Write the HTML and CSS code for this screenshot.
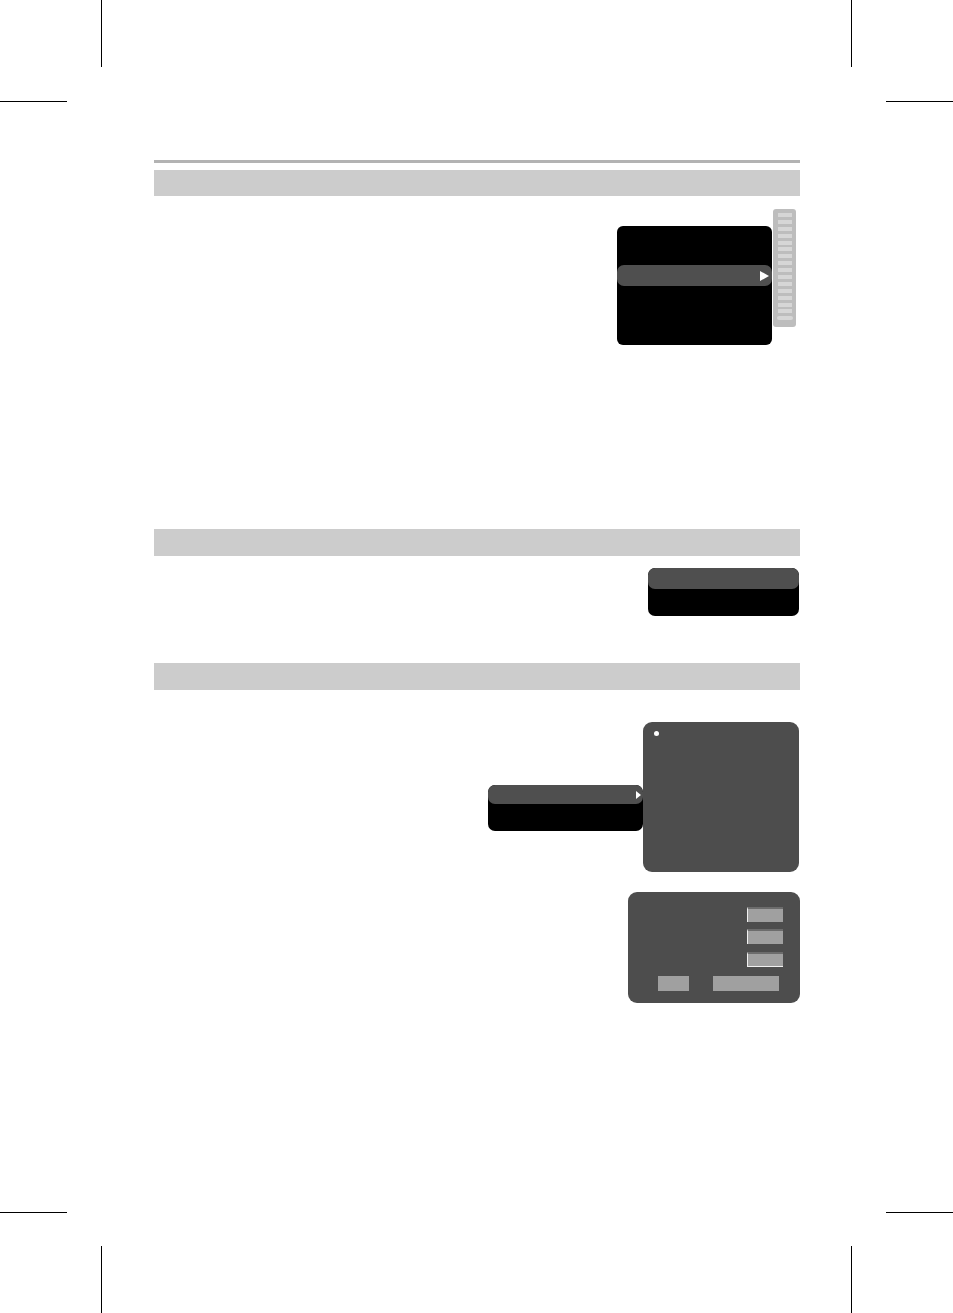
FILE: index.html
```html
<!DOCTYPE html>
<html lang="en">
<head>
<meta charset="utf-8">
<title>Manual page</title>
<link rel="stylesheet" href="styles.css">
</head>
<body>
<div class="page">
  <div class="mark mark-v mark-tl-v"></div>
  <div class="mark mark-h mark-tl-h"></div>
  <div class="mark mark-v mark-tr-v"></div>
  <div class="mark mark-h mark-tr-h"></div>
  <div class="mark mark-v mark-bl-v"></div>
  <div class="mark mark-h mark-bl-h"></div>
  <div class="mark mark-v mark-br-v"></div>
  <div class="mark mark-h mark-br-h"></div>

  <div class="content">
    <div class="rule"></div>

    <div class="bar bar-first"></div>
    <div class="section section-one">
      <div class="menu-main">
        <div class="menu-main-row">
          <svg class="tri-big" width="9" height="10" viewBox="0 0 9 10"><polygon points="0,0 9,5 0,10" fill="#fff"/></svg>
        </div>
      </div>
      <div class="scrollbar">
        <span class="seg"></span><span class="seg"></span><span class="seg"></span><span class="seg"></span>
        <span class="seg"></span><span class="seg"></span><span class="seg"></span><span class="seg"></span>
        <span class="seg"></span><span class="seg"></span><span class="seg"></span><span class="seg"></span>
        <span class="seg"></span><span class="seg"></span><span class="seg"></span><span class="seg seg-last"></span>
      </div>
    </div>

    <div class="bar"></div>
    <div class="section section-two">
      <div class="pill-menu pill-wide">
        <div class="pill-head"></div>
      </div>
    </div>

    <div class="bar"></div>
    <div class="section section-three">
      <div class="sub-row">
        <div class="pill-menu pill-left">
          <div class="pill-head pill-head-arrow">
            <svg width="5" height="8" viewBox="0 0 5 8"><polygon points="0,0 5,4 0,8" fill="#fff"/></svg>
          </div>
        </div>
        <div class="panel">
          <span class="dot"></span>
        </div>
      </div>
      <div class="dialog">
        <div class="fields">
          <div class="field"></div>
          <div class="field"></div>
          <div class="field field-last"></div>
        </div>
        <div class="buttons">
          <div class="btn btn-small"></div>
          <div class="btn btn-wide"></div>
        </div>
      </div>
    </div>
  </div>
</div>
</body>
</html>
```

FILE: styles.css
```css
html, body {
  margin: 0;
  padding: 0;
  background: #ffffff;
  font-family: "Liberation Sans", Arial, sans-serif;
}

.page {
  position: relative;
  width: 953px;
  height: 1313px;
  overflow: hidden;
  background: #ffffff;
}

/* crop marks */
.mark {
  position: absolute;
  background: #000000;
}
.mark-v { width: 1px; height: 67px; }
.mark-h { width: 67px; height: 1px; }
.mark-tl-v { left: 101px; top: 0; }
.mark-tl-h { left: 0; top: 101px; }
.mark-tr-v { left: 851px; top: 0; }
.mark-tr-h { left: 886px; top: 101px; }
.mark-bl-v { left: 101px; top: 1246px; }
.mark-bl-h { left: 0; top: 1212px; }
.mark-br-v { left: 851px; top: 1246px; }
.mark-br-h { left: 886px; top: 1212px; }

.content {
  margin-left: 154px;
  width: 646px;
  padding-top: 160px;
}

.rule {
  height: 3px;
  background: #b3b3b3;
}

.bar {
  height: 27px;
  background: #cccccc;
}
.bar-first {
  margin-top: 7px;
  height: 26px;
}

.section {
  display: flex;
  box-sizing: border-box;
}

/* section 1 */
.section-one {
  height: 333px;
  justify-content: flex-end;
  align-items: flex-start;
  gap: 1px;
  padding: 13px 4px 0 0;
}

.menu-main {
  width: 155px;
  height: 119px;
  margin-top: 17px;
  background: #000000;
  border-radius: 6px;
  padding-top: 39px;
  box-sizing: border-box;
}
.menu-main-row {
  height: 21px;
  background: #4f4f4f;
  border-radius: 7px;
  display: flex;
  align-items: center;
  justify-content: flex-end;
  padding-right: 3px;
}
.tri-big { display: block; }

.scrollbar {
  width: 23px;
  height: 118px;
  background: #bdbdbd;
  border-radius: 3px;
  box-sizing: border-box;
  padding: 4px 4px 0 5px;
  display: flex;
  flex-direction: column;
  gap: 2.9px;
}
.seg {
  display: block;
  height: 4px;
  background: #d6d6d6;
  flex: none;
}
.seg-last {
  border-radius: 2px;
  margin: 0 -1px;
}

/* section 2 */
.section-two {
  height: 107px;
  justify-content: flex-end;
  padding: 12px 1px 0 0;
}

.pill-menu {
  background: #000000;
  border-radius: 7px;
  overflow: hidden;
}
.pill-wide {
  width: 151px;
  height: 48px;
}
.pill-head {
  height: 21px;
  background: #4f4f4f;
  border-radius: 7px;
}

/* section 3 */
.section-three {
  flex-direction: column;
  padding: 32px 1px 0 0;
}

.sub-row {
  display: flex;
  justify-content: flex-end;
  align-items: flex-start;
}
.pill-left {
  width: 155px;
  height: 46px;
  margin-top: 63px;
}
.pill-head-arrow {
  height: 19px;
  display: flex;
  align-items: center;
  justify-content: flex-end;
  padding-right: 2px;
}
.pill-head-arrow svg { display: block; }

.panel {
  width: 156px;
  height: 150px;
  background: #4d4d4d;
  border-radius: 9px;
  box-sizing: border-box;
  padding: 9px 0 0 11px;
}
.dot {
  display: block;
  width: 5px;
  height: 5px;
  border-radius: 50%;
  background: #ffffff;
}

.dialog {
  align-self: flex-end;
  margin-top: 20px;
  margin-right: -1px;
  width: 172px;
  height: 111px;
  background: #4d4d4d;
  border-radius: 9px;
  box-sizing: border-box;
  padding: 15px 17px 0 30px;
  display: flex;
  flex-direction: column;
}
.fields {
  align-self: flex-end;
  display: flex;
  flex-direction: column;
  gap: 7px;
}
.field {
  width: 36px;
  height: 15px;
  box-sizing: border-box;
  background: #a0a0a0;
  border-top: 2px solid #6c6c6c;
  border-left: 1px solid #f0f0f0;
}
.field-last {
  margin-top: 1px;
  border-bottom: 1px solid #f0f0f0;
}
.buttons {
  display: flex;
  gap: 24px;
  margin-top: 9px;
}
.btn {
  height: 15px;
  background: #a0a0a0;
}
.btn-small { width: 31px; }
.btn-wide { width: 66px; }
```
